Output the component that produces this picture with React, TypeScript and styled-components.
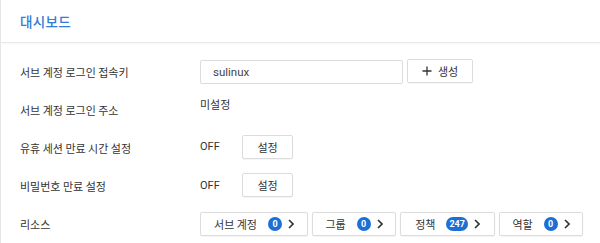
import React from "react";
import styled, { createGlobalStyle } from "styled-components";

const Global = createGlobalStyle`
  html, body { margin: 0; padding: 0; background: #fff; }
  body { font-family: Roboto, "Noto Sans CJK KR", sans-serif; color: #333; }
`;

const Page = styled.div`
  width: 600px;
  height: 243px;
  border-left: 1px solid #e6e6e6;
  box-sizing: border-box;
  overflow: hidden;
`;

const Header = styled.div`
  height: 42px;
  display: flex;
  align-items: center;
  padding-left: 19px;
  border-bottom: 1px solid #e8e8e8;
  box-shadow: 0 1px 2px rgba(0, 0, 0, 0.04);
`;

const Title = styled.h1`
  margin: 0;
  font-family: "Noto Sans CJK KR", sans-serif;
  font-size: 13.5px;
  font-weight: 500;
  color: #2f7bd8;
  letter-spacing: 0.3px;
`;

const Body = styled.div`
  padding: 10px 0 0 19px;
  display: grid;
  grid-template-columns: 180px 1fr;
  grid-auto-rows: 38px;
`;

const Label = styled.div`
  font-family: "Noto Sans CJK KR", sans-serif;
  font-size: 11px;
  color: #333;
  display: flex;
  align-items: center;
`;

const Value = styled.div<{ $shift?: number }>`
  display: flex;
  align-items: center;
  gap: 4px;
  margin-top: ${(p) => (p.$shift ? `${p.$shift}px` : "0")};
  font-size: 11px;
`;

const Input = styled.div`
  width: 203px;
  height: 24px;
  box-sizing: border-box;
  border: 1px solid #dcdcdc;
  border-radius: 2px;
  padding-left: 12px;
  display: flex;
  align-items: center;
  font-family: Roboto, sans-serif;
  font-size: 11.5px;
  color: #444;
`;

const Button = styled.button<{ $w: number }>`
  width: ${(p) => p.$w}px;
  height: 24px;
  box-sizing: border-box;
  border: 1px solid #dcdcdc;
  border-radius: 2px;
  background: #fff;
  box-shadow: 0 1px 1px rgba(0, 0, 0, 0.04);
  display: flex;
  align-items: center;
  justify-content: center;
  gap: 6px;
  padding: 0;
  font-family: Roboto, "Noto Sans CJK KR", sans-serif;
  font-size: 11px;
  color: #444;
  cursor: pointer;
`;

const PlainText = styled.span`
  font-family: "Noto Sans CJK KR", sans-serif;
  font-size: 11px;
  color: #333;
`;

const Off = styled.span`
  font-family: Roboto, sans-serif;
  font-size: 11px;
  color: #333;
  width: 38px;
`;

const Badge = styled.span`
  min-width: 14px;
  height: 14px;
  padding: 0 3px;
  box-sizing: border-box;
  border-radius: 7px;
  background: #1c6fd6;
  color: #fff;
  font-family: Roboto, sans-serif;
  font-weight: 700;
  font-size: 9px;
  display: inline-flex;
  align-items: center;
  justify-content: center;
  margin-left: 5px;
`;

const Plus = () => (
  <svg width="10" height="10" viewBox="0 0 10 10">
    <path d="M5 0.5v9M0.5 5h9" stroke="#333" strokeWidth="1.3" />
  </svg>
);

const Chevron = () => (
  <svg width="6" height="10" viewBox="0 0 6 10">
    <path d="M1 1l4 4-4 4" stroke="#333" strokeWidth="1.6" fill="none" />
  </svg>
);

const resources = [
  { name: "서브 계정", count: 0, w: 108 },
  { name: "그룹", count: 0, w: 84 },
  { name: "정책", count: 247, w: 95 },
  { name: "역할", count: 0, w: 84 },
];

export default function App() {
  return (
    <>
      <Global />
      <Page>
        <Header>
          <Title>대시보드</Title>
        </Header>
        <Body>
          <Label>서브 계정 로그인 접속키</Label>
          <Value>
            <Input>sulinux</Input>
            <Button $w={66} style={{ marginTop: -3 }}>
              <Plus />
              <PlainText>생성</PlainText>
            </Button>
          </Value>

          <Label>서브 계정 로그인 주소</Label>
          <Value $shift={-12}>
            <PlainText>미설정</PlainText>
          </Value>

          <Label>유휴 세션 만료 시간 설정</Label>
          <Value $shift={-3}>
            <Off>OFF</Off>
            <Button $w={51}>
              <PlainText>설정</PlainText>
            </Button>
          </Value>

          <Label>비밀번호 만료 설정</Label>
          <Value $shift={-2}>
            <Off>OFF</Off>
            <Button $w={51}>
              <PlainText>설정</PlainText>
            </Button>
          </Value>

          <Label>리소스</Label>
          <Value>
            {resources.map((r) => (
              <Button key={r.name} $w={r.w}>
                <PlainText>{r.name}</PlainText>
                <Badge>{r.count}</Badge>
                <Chevron />
              </Button>
            ))}
          </Value>
        </Body>
      </Page>
    </>
  );
}
